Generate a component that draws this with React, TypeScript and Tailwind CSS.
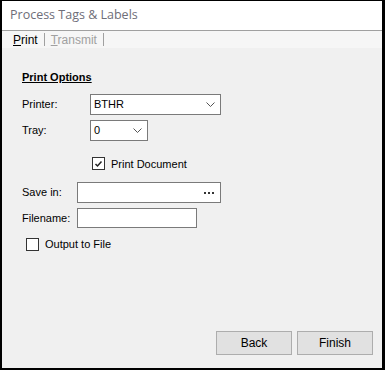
import type { ReactNode } from 'react';

const sans = { fontFamily: '"Liberation Sans", Arial, sans-serif' };

function Chevron() {
  return (
    <svg width="9" height="5" viewBox="0 0 9 5" className="shrink-0">
      <path d="M0.5 0.5 L4.5 4.5 L8.5 0.5" fill="none" stroke="#555" strokeWidth="1" />
    </svg>
  );
}

function Combo({ value, width }: { value: string; width: string }) {
  return (
    <div className={`flex h-[21px] items-center justify-between border border-[#7a7a7a] bg-white pl-[3px] pr-[5px] ${width}`}>
      <span>{value}</span>
      <Chevron />
    </div>
  );
}

function Check({ checked, children }: { checked?: boolean; children: ReactNode }) {
  return (
    <label className="flex items-center gap-[6px]">
      <span className="flex h-[13px] w-[13px] items-center justify-center border border-[#333] bg-white">
        {checked && (
          <svg width="9" height="8" viewBox="0 0 9 8">
            <path d="M1.5 4 L3.5 6 L7.5 1.5" fill="none" stroke="#222" strokeWidth="1.5" />
          </svg>
        )}
      </span>
      {children}
    </label>
  );
}

function Button({ children }: { children: ReactNode }) {
  return (
    <button className="h-[24px] w-[76px] border border-[#adadad] bg-[#e1e1e1] text-[12px] text-black">{children}</button>
  );
}

export default function App() {
  return (
    <div
      className="flex h-[370px] w-[385px] flex-col border-t border-r-[3px] border-b-2 border-l-2 border-black bg-[#f0f0f0] text-[11px] text-black"
      style={sans}
    >
      <div
        className="flex h-[30px] shrink-0 items-center border-b border-[#a0a0a0] bg-white pl-[8px] text-[12.5px] text-[#6e6e78]"
        style={{ fontFamily: '"Open Sans", "Noto Sans", sans-serif' }}
      >
        Process Tags &amp; Labels
      </div>
      <div className="flex h-[17px] shrink-0 items-center bg-[#f6f6f6] pl-[11px] text-[12px]">
        <span>
          <span className="underline">P</span>rint
        </span>
        <span className="mx-[6px] h-[13px] w-px bg-[#a0a0a0]" />
        <span className="text-[#a0a0a0]">
          <span className="underline">T</span>ransmit
        </span>
        <span className="ml-[6px] h-[13px] w-px bg-[#a0a0a0]" />
      </div>

      <div className="flex flex-1 flex-col pl-[20px]">
        <div className="mt-[21px] font-bold underline">Print Options</div>

        <div className="mt-[8px] flex items-center">
          <span className="w-[68px]">Printer:</span>
          <Combo value="BTHR" width="w-[131px]" />
        </div>
        <div className="mt-[5px] flex items-center">
          <span className="w-[68px]">Tray:</span>
          <Combo value="0" width="w-[58px]" />
        </div>

        <div className="ml-[70px] mt-[15px]">
          <Check checked>Print Document</Check>
        </div>

        <div className="mt-[10px] flex items-center">
          <span className="w-[55px]">Save in:</span>
          <div className="flex h-[21px] w-[144px] items-center justify-end gap-[2px] border border-[#7a7a7a] bg-white pr-[6px]">
            <span className="h-[2px] w-[2px] bg-[#333]" />
            <span className="h-[2px] w-[2px] bg-[#333]" />
            <span className="h-[2px] w-[2px] bg-[#333]" />
          </div>
        </div>
        <div className="mt-[5px] flex items-center">
          <span className="w-[55px]">Filename:</span>
          <div className="h-[20px] w-[120px] border border-[#7a7a7a] bg-white" />
        </div>

        <div className="ml-[4px] mt-[8px]">
          <Check>Output to File</Check>
        </div>

        <div className="mt-auto mb-[13px] mr-[9px] flex justify-end gap-[5px]">
          <Button>Back</Button>
          <Button>Finish</Button>
        </div>
      </div>
    </div>
  );
}
